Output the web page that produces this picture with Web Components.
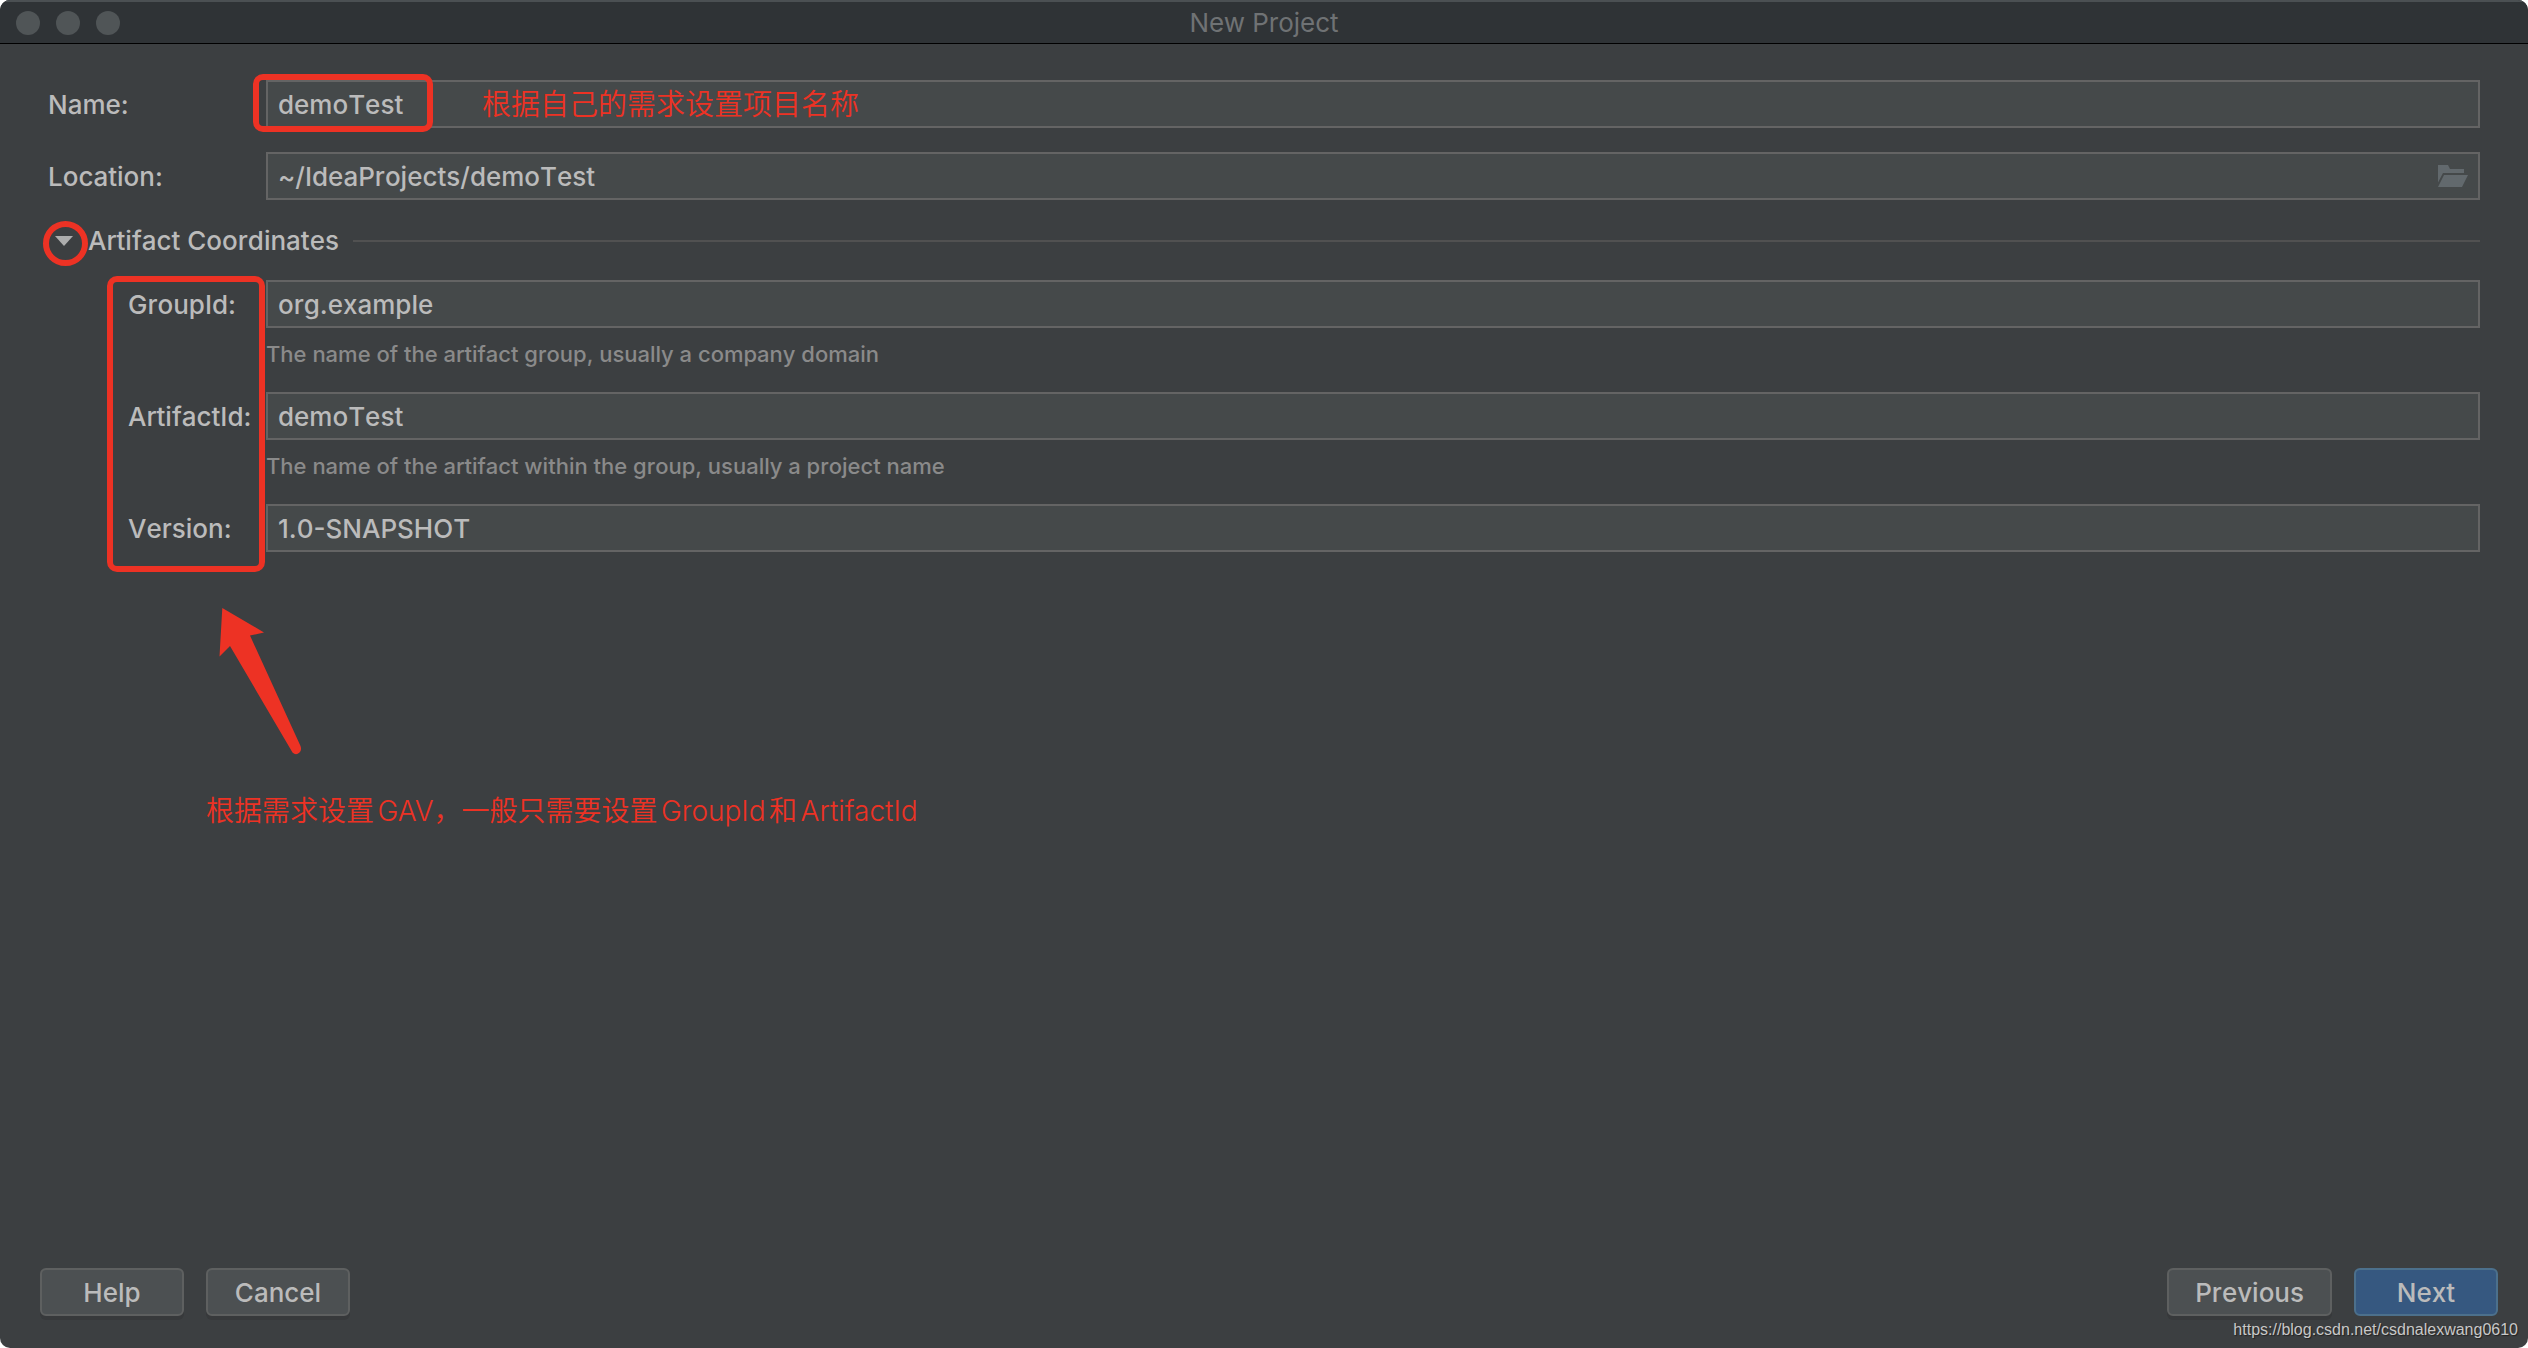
<!DOCTYPE html>
<html lang="zh-CN">
<head>
<meta charset="utf-8">
<title>New Project</title>
<style>
  html, body { margin: 0; background: #fff; }
  body { font-family: Inter, "Noto Sans CJK SC", sans-serif; font-size: 26px; line-height: 32px; font-weight: 500; font-kerning: none; color: #bbbbbb; }
</style>
</head>
<body>
<dialog-window heading="New Project">
  <form-field label="Name:" value="demoTest">
    <mark-box slot="mark"></mark-box>
    <mark-note slot="note" large>根据自己的需求设置项目名称</mark-note>
  </form-field>
  <form-field label="Location:" value="~/IdeaProjects/demoTest" browse></form-field>
  <fold-section heading="Artifact Coordinates">
    <form-field label="GroupId:" value="org.example" hint="The name of the artifact group, usually a company domain"></form-field>
    <form-field label="ArtifactId:" value="demoTest" hint="The name of the artifact within the group, usually a project name"></form-field>
    <form-field label="Version:" value="1.0-SNAPSHOT"></form-field>
  </fold-section>
  <arrow-note>根据需求设置GAV，一般只需要设置GroupId和ArtifactId</arrow-note>
  <push-button slot="left">Help</push-button>
  <push-button slot="left">Cancel</push-button>
  <push-button slot="right">Previous</push-button>
  <push-button slot="right" primary>Next</push-button>
  <water-mark slot="credit">https://blog.csdn.net/csdnalexwang0610</water-mark>
</dialog-window>

<script>
class Part extends HTMLElement {
  connectedCallback() {
    if (this.shadowRoot) return;
    this.attachShadow({ mode: 'open' }).innerHTML = this.view();
  }
  attr(name) { return this.getAttribute(name) || ''; }
}

customElements.define('dialog-window', class extends Part {
  view() {
    return `<style>
      :host { display: flex; flex-direction: column; box-sizing: border-box; min-height: 100vh; position: relative;
        background: #3c3f41; border-radius: 10px; overflow: hidden; }
      header { display: grid; grid-template-columns: 1fr auto 1fr; align-items: center; box-sizing: border-box; height: 44px;
        background: #2f3336; border-top: 2px solid #4b5053; border-bottom: 1px solid #000; padding: 0 16px; }
      .lights { display: flex; gap: 16px; }
      .lights i { width: 24px; height: 24px; border-radius: 50%; background: #505557; }
      h1 { margin: 0; font-size: 26px; font-weight: 400; font-kerning: auto; color: #6f7274; }
      main { flex: 1; display: flex; flex-direction: column; gap: 24px; padding: 36px 48px 0; }
      footer { display: flex; justify-content: space-between; padding: 0 30px 32px 40px; }
      footer div { display: flex; gap: 22px; }
    </style>
    <header><span class="lights"><i></i><i></i><i></i></span><h1>${this.attr('heading')}</h1></header>
    <main><slot></slot></main>
    <footer><div><slot name="left"></slot></div><div><slot name="right"></slot></div></footer>
    <slot name="credit"></slot>`;
  }
});

customElements.define('form-field', class extends Part {
  view() {
    const hint = this.attr('hint');
    const folder = `<button type="button" aria-label="Browse">
      <svg width="30" height="22" viewBox="0 0 30 22" fill="#62696d"><path d="M0 0H10L12 4H26V8H5L0 17.500Z"/><path d="M6 10H30L24 22H0Z"/></svg></button>`;
    return `<style>
      :host { display: grid; grid-template-columns: var(--label-width, 218px) 1fr; align-items: center; }
      label { padding-top: 2px; white-space: nowrap; }
      .box { position: relative; display: flex; align-items: center; box-sizing: border-box; height: 48px;
        background: #45494a; border: 2px solid #646464; padding-right: 10px; }
      input { flex: 1; min-width: 0; font: inherit; font-kerning: none; color: inherit; background: none; border: 0; outline: 0; padding: 2px 0 0 10px; margin: 0; }
      button { display: flex; border: 0; background: none; padding: 0; }
      p { grid-column: 2; margin: 0; font-size: 22px; line-height: 28px; padding: 12px 0; color: #8a8a8a; }
      ::slotted([slot=mark]) { position: absolute; left: -15px; top: -8px; width: 180px; height: 58px; }
      ::slotted([slot=note]) { position: absolute; left: 214px; }
    </style>
    <label for="field">${this.attr('label')}</label>
    <div class="box"><input id="field" type="text" value="${this.attr('value')}" spellcheck="false">
      ${this.hasAttribute('browse') ? folder : ''}<slot name="mark"></slot><slot name="note"></slot></div>
    ${hint ? `<p>${hint}</p>` : ''}`;
  }
});

customElements.define('fold-section', class extends Part {
  view() {
    return `<style>
      :host { display: block; }
      .head { display: flex; align-items: center; height: 34px; margin-bottom: 22px; gap: 14px; }
      button { position: relative; display: flex; align-items: center; gap: 15px; border: 0; background: none;
        padding: 0 0 0 7px; font: inherit; font-kerning: none; color: inherit; }
      hr { flex: 1; border: 0; height: 2px; margin: 0; background: #515151; }
      mark-box.ring { position: absolute; left: -5px; top: -4px; width: 45px; height: 45px; --mark-radius: 50%; }
      .rows { position: relative; display: flex; flex-direction: column; gap: 12px; padding-left: 80px; --label-width: 138px; }
      mark-box.ids { position: absolute; left: 59px; top: -4px; width: 158px; height: 296px; }
    </style>
    <div class="head"><button type="button" aria-expanded="true">
      <svg width="18" height="10" viewBox="0 0 18 10" fill="#adadad"><path d="M0 0H18L9 10Z"/></svg>
      <span>${this.attr('heading')}</span><mark-box class="ring"></mark-box></button><hr></div>
    <div class="rows"><slot></slot><mark-box class="ids"></mark-box></div>`;
  }
});

customElements.define('mark-box', class extends Part {
  view() {
    return `<style>
      :host { display: block; box-sizing: border-box; border: 6px solid #ed3224; border-radius: var(--mark-radius, 10px); pointer-events: none; }
    </style>`;
  }
});

customElements.define('mark-note', class extends Part {
  view() {
    return `<style>
      :host { display: block; font-size: 28px; line-height: 32px; font-weight: 350; font-kerning: auto; color: #ed3224; white-space: nowrap; text-autospace: normal; }
      :host([large]) { font-size: 29px; padding-top: 2px; }
    </style><slot></slot>`;
  }
});

customElements.define('arrow-note', class extends Part {
  view() {
    return `<style>
      :host { display: flex; flex-direction: column; align-items: flex-start; gap: 40px; padding: 32px 0 0 158px; }
      svg { margin-left: 12px; }
    </style>
    <svg width="84" height="147" viewBox="0 0 84 147" fill="#ed3224"><path d="M4.300 0L46 24.500L32 27.500L82.500 138Q84 142 81.500 144.500Q78 148 74.500 144.500L12 38L1.500 48.500Z"/></svg>
    <mark-note><slot></slot></mark-note>`;
  }
});

customElements.define('push-button', class extends Part {
  view() {
    return `<style>
      :host { display: block; }
      button { box-sizing: border-box; min-width: 144px; height: 48px; padding: 2px 26px 0; font: inherit; font-kerning: none; color: inherit;
        background: #4c5052; border: 2px solid #5e6060; border-radius: 6px; box-shadow: 0 4px 0 #37393b; }
      :host([primary]) button { background: #365880; border-color: #4c708c; box-shadow: none; }
    </style><button type="button"><slot></slot></button>`;
  }
});

customElements.define('water-mark', class extends Part {
  view() {
    return `<style>
      :host { position: absolute; right: 10px; bottom: 8px; font: 16px/20px "Liberation Sans", sans-serif; color: #c8c8c8;
        text-shadow: 1px 1px 1px #222; }
    </style><slot></slot>`;
  }
});
</script>
</body>
</html>
